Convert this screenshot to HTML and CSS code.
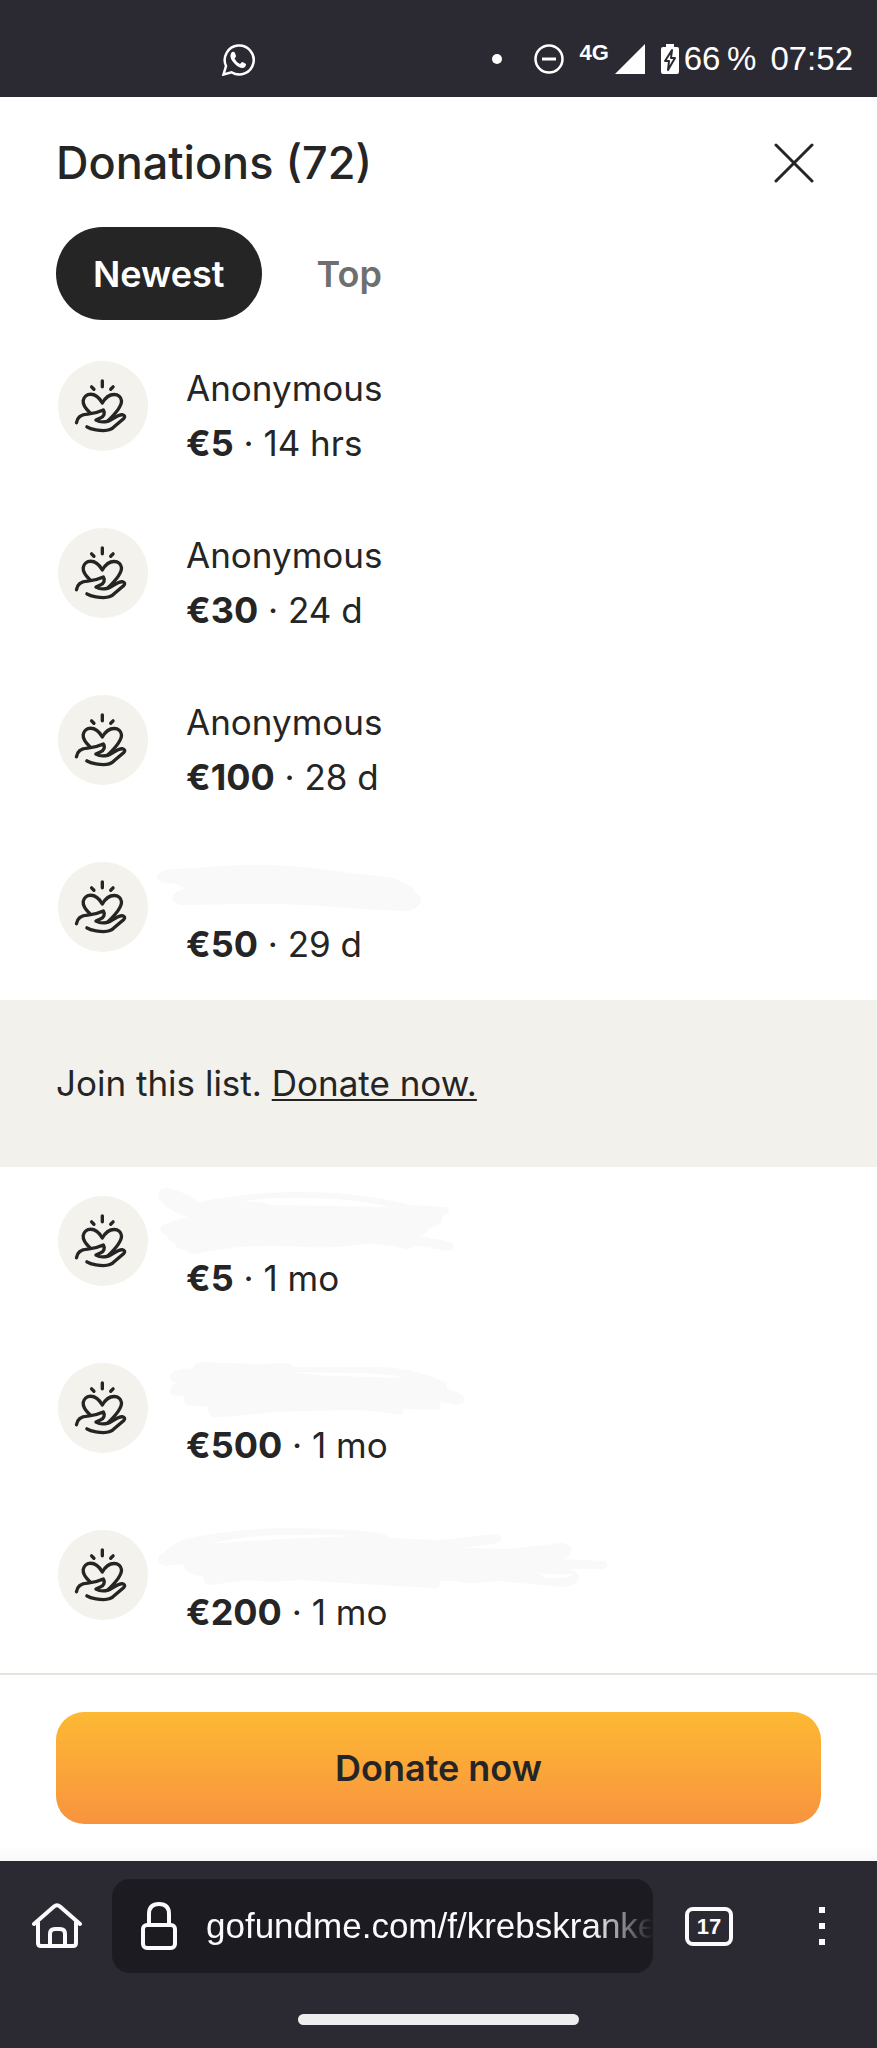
FILE: index.html
```
<!doctype html>
<html lang="en">

<head>
    <meta charset="UTF-8">
    <meta name="viewport" content="width=device-width, initial-scale=1.0">
    <title>Donations</title>
    <link rel="stylesheet" href="styles.css">
</head>

<body>
    <svg class="sprite" aria-hidden="true">
        <symbol id="hand-heart" viewBox="23 17 268 268">
            <path d="M155 76V94M123 94l7 7M187 94l-7 7" />
            <path d="M118 171C104 158 97 146 98 135C102 112 134 105 155 142C176 105 210 114 212 135C213 152 196 172 172 195" />
            <path d="M78 201C80 184 92 176 112 175C130 174 145 169 158 163C164 172 160 182 149 187L136 193Q152 202 172 196C188 190 200 176 214 177Q226 180 219 188L190 213C182 223 160 226 136 222Q118 219 109 213" />
        </symbol>
    </svg>

    <div class="status-bar">
        <svg class="whatsapp" viewBox="0 0 33 33">
            <path d="M1.500 31.500L4 23A14.500 14.500 0 1 1 9.500 29.300Z" fill="none" stroke="#fff" stroke-width="2.500" />
            <path d="M10 9Q12 8 13 10L14 13Q14 14 12.500 15.500Q14 19 18 21L20 19Q21 19 24 21Q24 24 21 25Q16 25 12 20Q8 16 8.500 12Q9 10 10 9Z" fill="#fff" />
        </svg>
        <div class="status-icons">
            <span class="dot"></span>
            <svg class="dnd" viewBox="0 0 30 30">
                <circle cx="15" cy="15" r="13.500" fill="none" stroke="#fff" stroke-width="2.500" />
                <path d="M8 15H22" stroke="#fff" stroke-width="3" />
            </svg>
            <span class="network">4G</span>
            <svg class="signal" viewBox="0 0 30 30">
                <path d="M0 30L30 0V30Z" fill="#fff" />
            </svg>
            <svg class="battery" viewBox="0 0 18 30">
                <path d="M5 0H13V3H16Q18 3 18 5V28Q18 30 16 30H2Q0 30 0 28V5Q0 3 2 3H5Z" fill="#fff" />
                <path d="M11 6L4 17H8L7 26L14 14H10Z" fill="#fff" stroke="#2b2a33" stroke-width="2" stroke-linejoin="round" />
            </svg>
            <span class="percent">66&#8201;%</span>
            <span class="clock">07:52</span>
        </div>
    </div>

    <main>
        <header class="header">
            <h1>Donations (72)</h1>
            <button class="close" aria-label="Close">
                <svg viewBox="0 0 40 40">
                    <path d="M2 2L38 38M38 2L2 38" />
                </svg>
            </button>
        </header>

        <div class="tabs">
            <button class="tab active">Newest</button>
            <button class="tab">Top</button>
        </div>

        <ul class="donations">
            <li class="donation">
                <svg class="avatar"><use href="#hand-heart" /></svg>
                <div class="donor">
                    <p class="name">Anonymous</p>
                    <p class="amount"><b>€5</b> · 14 hrs</p>
                </div>
            </li>
            <li class="donation">
                <svg class="avatar"><use href="#hand-heart" /></svg>
                <div class="donor">
                    <p class="name">Anonymous</p>
                    <p class="amount"><b>€30</b> · 24 d</p>
                </div>
            </li>
            <li class="donation">
                <svg class="avatar"><use href="#hand-heart" /></svg>
                <div class="donor">
                    <p class="name">Anonymous</p>
                    <p class="amount"><b>€100</b> · 28 d</p>
                </div>
            </li>
            <li class="donation">
                <svg class="avatar"><use href="#hand-heart" /></svg>
                <div class="donor">
                    <p class="name"></p>
                    <p class="amount"><b>€50</b> · 29 d</p>
                </div>
                <svg class="scribble" viewBox="0 0 460 70">
                    <path d="M1 24C1 19 8 16 20 16C60 14 80 11 104 12C150 12 190 20 231 24Q240 25 245 29Q258 33 259 40Q265 42 265 48Q262 58 247 58C190 56 150 50 104 51L24 52Q16 50 16 44Q18 38 29 36Q24 30 9 30Q1 29 1 24Z" />
                </svg>
            </li>
        </ul>

        <p class="join">Join this list. <a href="#donate">Donate now.</a></p>

        <ul class="donations">
            <li class="donation">
                <svg class="avatar"><use href="#hand-heart" /></svg>
                <div class="donor">
                    <p class="name"></p>
                    <p class="amount"><b>€5</b> · 1 mo</p>
                </div>
                <svg class="scribble" viewBox="0 0 460 70">
                    <path fill-rule="evenodd" d="M2 8Q3 1 11 1Q24 3 44 15Q90 5 144 5Q205 5 254 18L291 20Q297 25 286 30Q288 38 272 41Q272 47 264 49L296 55Q300 63 292 64L257 58Q257 62 251 62Q230 57 211 57Q170 62 151 60Q110 58 84 60Q60 63 37 67Q30 65 31 63L21 61Q19 54 12 53Q12 48 5 45Q3 38 9 37L31 30Q4 20 2 8ZM86 14Q120 10 144 11Q190 10 235 20L117 18Q100 14 86 14Z" />
                </svg>
            </li>
            <li class="donation">
                <svg class="avatar"><use href="#hand-heart" /></svg>
                <div class="donor">
                    <p class="name"></p>
                    <p class="amount"><b>€500</b> · 1 mo</p>
                </div>
                <svg class="scribble" viewBox="0 0 460 70">
                    <path fill-rule="evenodd" d="M14 21Q15 16 37 14Q40 8 46 8L101 10L131 9Q136 10 137 13L217 13C250 13 270 20 291 29Q290 33 292 35L305 40Q314 48 301 51L284 48Q286 55 281 56L247 55Q248 62 243 61Q215 56 197 56L117 58Q80 63 56 63Q51 60 52 53L32 51Q27 49 28 42L16 41Q10 35 20 29Q14 28 14 21ZM136 18L197 19Q230 19 247 24L184 22Q160 22 136 18Z" />
                </svg>
            </li>
            <li class="donation">
                <svg class="avatar"><use href="#hand-heart" /></svg>
                <div class="donor">
                    <p class="name"></p>
                    <p class="amount"><b>€200</b> · 1 mo</p>
                </div>
                <svg class="scribble" viewBox="0 0 460 70">
                    <path fill-rule="evenodd" d="M2 39Q2 33 8 31Q20 20 30 18Q90 4 170 8Q234 10 233 17L284 19L338 13Q347 13 345 20Q344 23 304 27L351 28L405 22Q418 24 415 32Q413 36 408 38L448 40Q455 44 448 48L412 48Q425 52 423 57Q420 66 405 66L340 60Q310 64 301 60L284 60Q285 67 278 67Q200 63 144 59Q110 62 92 59L54 64Q46 63 48 55Q28 54 28 43L10 45Q2 44 2 39ZM54 23Q90 14 131 14Q170 13 200 15Q110 18 54 23ZM377 51Q398 55 417 53Q414 58 388 57Q387 53 377 51Z" />
                </svg>
            </li>
        </ul>
    </main>

    <footer class="footer">
        <button class="donate" id="donate">Donate now</button>
    </footer>

    <nav class="browser">
        <div class="toolbar">
            <button class="home" aria-label="Home">
                <svg viewBox="0 0 50 46">
                    <path d="M2 21L22 3.500Q25 1 28 3.500L48 21M6 19V40Q6 43 9 43H41Q44 43 44 40V19M18 42V31Q18 26 23 26H28Q33 26 33 31V42" />
                </svg>
            </button>
            <div class="url-box">
                <svg viewBox="0 0 36 48">
                    <path d="M8 23V12Q8 2 18 2T28 12V23" />
                    <rect x="2" y="23" width="32" height="23" rx="4" />
                </svg>
                <input class="url" type="text" aria-label="Address" value="gofundme.com/f/krebskranke">
            </div>
            <button class="tab-count" aria-label="Tabs">17</button>
            <button class="menu" aria-label="Menu"><i></i><i></i><i></i></button>
        </div>
        <div class="handle"></div>
    </nav>
</body>

</html>
```

FILE: styles.css
```
* {
    margin: 0;
    padding: 0;
    box-sizing: border-box;
}

body {
    display: flex;
    flex-direction: column;
    min-height: 100vh;
    background-color: #fff;
    color: #252525;
    font-family: Inter, "Liberation Sans", sans-serif;
    font-size: 35px;
}

button,
input {
    border: none;
    background: none;
    color: inherit;
    font: inherit;
}

svg {
    display: block;
    flex-shrink: 0;
}

.sprite {
    position: absolute;
    width: 0;
    height: 0;
}

.status-bar {
    display: flex;
    align-items: center;
    justify-content: space-between;
    padding: 40px 24px 19px 222px;
    background-color: #2b2a33;
    color: #fff;
    font-family: "Liberation Sans", Arial, sans-serif;
    font-size: 33px;
    line-height: 38px;
}

.whatsapp {
    width: 33px;
    height: 33px;
}

.status-icons {
    display: flex;
    align-items: center;
}

.dot {
    width: 10px;
    height: 10px;
    margin-right: 32px;
    border-radius: 50%;
    background-color: #fff;
}

.dnd,
.signal {
    width: 30px;
    height: 30px;
}

.network {
    align-self: flex-start;
    margin: 0 6px 0 15px;
    font-size: 22px;
    font-weight: bold;
    line-height: 26px;
}

.battery {
    width: 18px;
    height: 30px;
    margin: 0 5px 0 16px;
}

.clock {
    margin-left: 14px;
}

main {
    flex: 1;
}

.header {
    display: flex;
    align-items: center;
    justify-content: space-between;
    padding: 36px 62px 34px 56px;
}

h1 {
    font-size: 45px;
    font-weight: 500;
    line-height: 60px;
}

.close svg {
    width: 42px;
    height: 40px;
    fill: none;
    stroke: #252525;
    stroke-width: 3;
    stroke-linecap: round;
}

.tabs {
    display: flex;
    gap: 18px;
    padding: 0 56px;
}

.tab {
    padding: 1px 37px 0;
    border-radius: 47px;
    color: #6f6f6f;
    font-size: 36px;
    font-weight: 600;
    line-height: 92px;
}

.tab.active {
    background-color: #252525;
    color: #fff;
}

.donations {
    list-style: none;
}

.tabs + .donations {
    margin-top: 12px;
}

.donation {
    display: flex;
    position: relative;
    gap: 38px;
    padding: 29px 58px 28px;
}

.avatar {
    width: 90px;
    height: 90px;
    border-radius: 50%;
    background-color: #f3f2ec;
    fill: none;
    stroke: #252525;
    stroke-width: 10;
    stroke-linecap: round;
    stroke-linejoin: round;
}

.name,
.amount {
    height: 55px;
    line-height: 55px;
}

.amount b {
    font-size: 36px;
    font-weight: 700;
}

.scribble {
    position: absolute;
    top: 20px;
    left: 156px;
    width: 460px;
    height: 70px;
    fill: #f9f9f9;
}

.join {
    padding: 56px;
    background-color: #f3f1ec;
    line-height: 55px;
}

.join a {
    color: inherit;
    text-decoration-thickness: 2px;
    text-underline-offset: 3px;
}

.footer {
    padding: 37px 56px;
    border-top: 2px solid #e8e4dc;
    background: linear-gradient(#fff 92%, #f8f8f8);
}

.donate {
    display: block;
    width: 100%;
    border-radius: 28px;
    background: linear-gradient(#fdb933, #f8933f);
    font-size: 36px;
    font-weight: 600;
    line-height: 112px;
}

.browser {
    padding: 18px 0 23px;
    background-color: #2b2a33;
    color: #fbfbfe;
    font-family: "Liberation Sans", Arial, sans-serif;
}

.browser svg {
    fill: none;
    stroke: #fbfbfe;
    stroke-width: 4;
    stroke-linecap: round;
    stroke-linejoin: round;
}

.toolbar {
    display: flex;
    align-items: center;
    padding: 0 52px 0 32px;
}

.home svg {
    width: 50px;
    height: 46px;
}

.url-box {
    display: flex;
    flex: 1;
    align-items: center;
    gap: 29px;
    min-width: 0;
    height: 94px;
    margin: 0 32px 0 30px;
    padding-left: 29px;
    border-radius: 18px;
    background-color: #1c1b22;
}

.url-box svg {
    width: 36px;
    height: 48px;
}

.url {
    flex: 1;
    min-width: 0;
    font-size: 35px;
    -webkit-mask-image: linear-gradient(to left, transparent, #000 60px);
    mask-image: linear-gradient(to left, transparent, #000 60px);
}

.tab-count {
    width: 48px;
    height: 39px;
    border: 4px solid #fbfbfe;
    border-radius: 8px;
    font-size: 22px;
    font-weight: bold;
    line-height: 31px;
}

.menu {
    display: flex;
    flex-direction: column;
    gap: 10px;
    margin-left: 86px;
}

.menu i {
    width: 6px;
    height: 6px;
    background-color: #fbfbfe;
}

.handle {
    width: 32%;
    height: 11px;
    margin: 41px auto 0;
    border-radius: 6px;
    background-color: #eee;
}
```
